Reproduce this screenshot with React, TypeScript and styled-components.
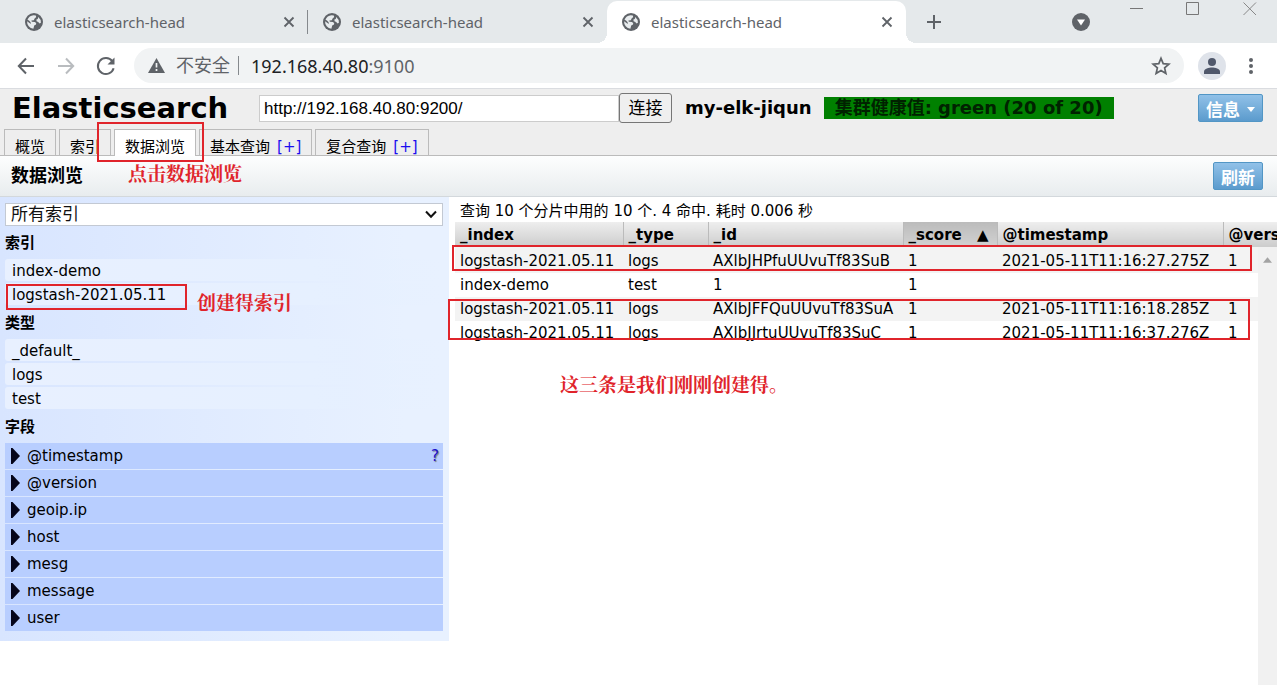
import React from "react";
import styled, { createGlobalStyle, css } from "styled-components";

const verdana = `Verdana, "DejaVu Sans", "Noto Sans CJK SC", sans-serif`;
const chromeFont = `"Noto Sans", "Open Sans", "Noto Sans CJK SC", sans-serif`;

const GlobalStyle = createGlobalStyle`
  *, *::before, *::after { box-sizing: border-box; }
  body { margin: 0; background: #fff; color: #000; font: 15px/24px ${verdana}; }
  button, input, select { margin: 0; font: inherit; color: inherit; }
  h1, h2, h3, ul { margin: 0; padding: 0; font-weight: bold; }
  ul { list-style: none; font-weight: normal; }
`;

const Page = styled.div`
  position: relative;
  display: flex;
  flex-direction: column;
  min-height: 100vh;
  overflow: hidden;
`;

/* browser frame */

const TabStrip = styled.div`
  display: flex;
  align-items: stretch;
  height: 43px;
  background: #e5e9eb;
  font: 15px/24px ${chromeFont};
  color: #5f6368;
`;

const BrowserTab = styled.div<{ $active?: boolean; $divider?: boolean }>`
  position: relative;
  display: flex;
  align-items: center;
  flex: 0 1 299px;
  min-width: 0;
  gap: 11px;
  padding: 1px 13px 0 15px;
  &:first-child { flex-basis: 308px; padding-left: 25px; }
  ${(p) => p.$active && css`
    background: #fff;
    border-radius: 10px 10px 0 0;
    margin-top: 1px;
    padding-top: 0;
    &::before, &::after {
      content: "";
      position: absolute;
      bottom: 0;
      width: 10px;
      height: 10px;
    }
    &::before { right: 100%; background: radial-gradient(circle at 0 0, #e5e9eb 10px, #fff 10px); }
    &::after { left: 100%; background: radial-gradient(circle at 100% 0, #e5e9eb 10px, #fff 10px); }
  `}
  ${(p) => p.$divider && css`
    &::after {
      content: "";
      position: absolute;
      right: 0;
      top: 10px;
      width: 1px;
      height: 24px;
      background: #85898d;
    }
  `}
`;

const TabTitle = styled.span`
  flex: 1;
  white-space: nowrap;
  overflow: hidden;
`;

const IconButton = styled.button`
  display: flex;
  align-items: center;
  justify-content: center;
  flex: none;
  padding: 0;
  border: 0;
  background: none;
  color: #5f6368;
`;

const NewTab = styled(IconButton)`
  width: 55px;
`;

const Spacer = styled.div`
  flex: 1;
`;

const TabSearch = styled(IconButton)`
  width: 18px;
  margin-right: 40px;
`;

const WindowControls = styled.div`
  display: flex;
  align-items: flex-start;
  gap: 43px;
  padding: 2px 20px 0 0;
`;

const Toolbar = styled.div`
  display: flex;
  align-items: center;
  gap: 18px;
  height: 46px;
  padding: 0 15px 0 16px;
  background: #fff;
  border-bottom: 1px solid #dadce0;
`;

const AddressBar = styled.div`
  display: flex;
  align-items: center;
  flex: 1;
  height: 35px;
  padding: 0 13px 0 14px;
  border-radius: 18px;
  background: #f1f3f4;
  font: 18px/24px ${chromeFont};
  color: #5f6368;
`;

const Insecure = styled.span`
  margin: 0 8px 0 11px;
  padding-right: 8px;
  line-height: 19px;
  border-right: 1px solid #85898d;
`;

const Url = styled.span`
  flex: 1;
  margin-left: 4px;
  b { font-weight: normal; color: #202124; }
`;

const Nav = styled.div`
  display: flex;
  gap: 20px;
`;

const Avatar = styled(IconButton)`
  width: 28px;
  height: 28px;
  margin: 0 -4px 0 -4px;
  border-radius: 50%;
  background: #dfe3ea;
`;

/* elasticsearch-head application */

const Header = styled.header`
  display: flex;
  flex-direction: column;
  justify-content: space-between;
  height: 67px;
  background: #eee;
  border-bottom: 1px solid #bbb;
`;

const HeaderTop = styled.div`
  display: flex;
  align-items: center;
  height: 38px;
  padding: 0 14px 0 12px;
`;

const AppTitle = styled.h1`
  width: 247px;
  font-size: 29px;
  line-height: 36px;
`;

const ConnectForm = styled.form`
  display: flex;
  align-items: center;
`;

const UriInput = styled.input`
  width: 360px;
  height: 27px;
  padding: 2px 4px 0;
  border: 1px solid #ccc;
  background: #fff;
  font: 17px/24px "Liberation Sans", Arial, sans-serif;
`;

const ConnectButton = styled.button`
  width: 53px;
  height: 30px;
  padding: 0;
  border: 1px solid #767676;
  border-radius: 3px;
  background: #efefef;
  font-size: 17px;
`;

const ClusterName = styled.strong`
  margin: 0 12px 0 13px;
  font-size: 18px;
  white-space: nowrap;
`;

const Health = styled.strong`
  padding: 0 11px;
  background: #008000;
  color: #020;
  font-size: 18px;
  line-height: 22px;
  white-space: nowrap;
`;

const BlueButton = styled.button`
  display: flex;
  align-items: center;
  gap: 7px;
  height: 28px;
  padding: 3px 7px 0;
  border: 1px solid #5296c5;
  border-radius: 2px;
  background: linear-gradient(#91c1e8, #5b9bcd);
  color: #fff;
  font-size: 17px;
  font-weight: bold;
  white-space: nowrap;
`;

const Menu = styled.nav`
  display: flex;
  align-items: flex-end;
  gap: 3px;
  padding-left: 4px;
`;

const MenuItem = styled.button<{ $active?: boolean }>`
  height: 26px;
  padding: 7px 10px 0;
  border: 1px solid #bbb;
  border-bottom: 0;
  background: ${(p) => (p.$active ? "#fff" : "#eee")};
  white-space: nowrap;
  line-height: 20px;
  ${(p) => p.$active && css`height: 27px; margin-bottom: -1px;`}
  span { margin-left: 7px; color: #1a0dee; }
`;

const SectionBar = styled.div`
  display: flex;
  align-items: center;
  justify-content: space-between;
  height: 41px;
  padding: 0 14px 0 11px;
  background: linear-gradient(#fdfefe, #e8ecee);
  border-bottom: 1px solid #d3d8dc;
  h2 { font-size: 18px; }
`;

const Body = styled.main`
  display: flex;
  flex: 1;
  align-items: flex-start;
`;

const Sidebar = styled.aside`
  flex: 0 0 449px;
  padding: 6px 6px 9px 5px;
  background: linear-gradient(90deg, #d8e5ff, #e8f1ff 90%);
`;

const IndexSelect = styled.div`
  position: relative;
  display: flex;
  margin-bottom: 1px;
  color: #111;
  select {
    width: 100%;
    height: 23px;
    padding: 0 5px;
    border: 1px solid #c3c9d3;
    background: #fff;
    appearance: none;
    font-size: 17px;
    line-height: 21px;
  }
  svg { position: absolute; right: 6px; top: 7px; pointer-events: none; }
`;

const FilterTitle = styled.h3`
  padding: 6px 0;
  font-size: 15px;
  line-height: 20px;
`;

const FilterItem = styled.li`
  height: 22px;
  margin: 0 0 2px;
  padding: 0 7px;
  border-radius: 3px;
  line-height: 24px;
  background: linear-gradient(90deg, #e8f0ff, #e6f0ff 70%, transparent);
`;

const Field = styled.li`
  display: flex;
  align-items: center;
  gap: 7px;
  height: 26px;
  margin-bottom: 1px;
  padding: 0 3px 0 6px;
  background: #b8ceff;
  span { flex: 1; }
  a { color: #1a0dcc; text-decoration: none; text-shadow: 1px 1px 1px #777; padding-right: 1px; }
`;

const Results = styled.section`
  flex: 1;
  align-self: stretch;
  display: flex;
  flex-direction: column;
  min-width: 0;
  padding: 3px 0 0 6px;
`;

const Summary = styled.p`
  margin: 0;
  padding-left: 5px;
  line-height: 22px;
`;

const TableArea = styled.div`
  position: relative;
  flex: 1;
  overflow: hidden;
`;

const DataTable = styled.table`
  width: 849px;
  table-layout: fixed;
  border-collapse: collapse;
  tbody tr:nth-child(odd) { background: #f3f3f3; }
  tbody tr:first-child td { padding-top: 2px; height: 26px; }
  td { height: 24px; padding: 0 5px; line-height: 24px; white-space: nowrap; }
`;

const HeadCell = styled.th<{ $w: number; $sorted?: boolean }>`
  width: ${(p) => p.$w}px;
  height: 25px;
  padding: 2px 5px 0;
  border-right: 1px solid #bbb;
  background: ${(p) => (p.$sorted ? "linear-gradient(#bbb, #d2d2d2)" : "linear-gradient(#eee, #ccc)")};
  text-align: left;
  white-space: nowrap;
  line-height: 23px;
  span { float: right; margin-right: 3px; }
`;

const ScrollTrack = styled.div`
  position: absolute;
  top: 25px;
  right: 0;
  bottom: 0;
  display: flex;
  align-items: flex-start;
  width: 19px;
  padding: 10px 5px;
  background: #f1f1f1;
`;

/* red review marks drawn over the page */

const Mark = styled.div<{ $x: number; $y: number; $w: number; $h: number }>`
  position: absolute;
  left: ${(p) => p.$x}px;
  top: ${(p) => p.$y}px;
  width: ${(p) => p.$w}px;
  height: ${(p) => p.$h}px;
  border: 2px solid #e0242b;
  pointer-events: none;
`;

const Note = styled.p<{ $x: number; $y: number }>`
  position: absolute;
  left: ${(p) => p.$x}px;
  top: ${(p) => p.$y}px;
  margin: 0;
  color: #e0242b;
  font: bold 19px/24px "Noto Serif CJK SC", SimSun, "Noto Sans CJK SC", serif;
  white-space: nowrap;
`;

const Globe = () => (
  <svg width="18" height="18" viewBox="0 0 18 18" aria-hidden="true">
    <circle cx="9" cy="9" r="9" fill="#5f6368" />
    <path d="M8.600 2.200 L10.800 2.400 L11.200 4 L9.600 5.600 L8.800 7.200 L6.400 7.400 L6.800 8.800 L9.800 8.900 L11.200 10 L11 11.500 L9.200 12.600 L8.400 15.800 A7 7 0 0 1 2.100 8.300 L5.800 11 L5.600 9.200 L4 7.600 L2.500 6.700 A7 7 0 0 1 8.600 2.200Z" fill="#e8ecee" />
    <path d="M13.200 4 A7 7 0 0 1 15.900 9.800 L14.600 10.400 L13.200 8.900 L11.600 8.300 L11.400 6.600 L12.800 6Z" fill="#e8ecee" />
  </svg>
);

const Cross = () => (
  <svg width="12" height="12" viewBox="0 0 12 12" aria-hidden="true">
    <path d="M1.500 1.500 L10.500 10.500 M10.500 1.500 L1.500 10.500" stroke="#5f6368" strokeWidth="1.800" />
  </svg>
);

const tabs = [{ divider: true }, {}, { active: true }];

const menu = [
  { label: "概览" },
  { label: "索引" },
  { label: "数据浏览", active: true },
  { label: "基本查询", add: true },
  { label: "复合查询", add: true },
];

const columns = [
  { name: "_index", width: 168 },
  { name: "_type", width: 85 },
  { name: "_id", width: 195 },
  { name: "_score", width: 94, sorted: true },
  { name: "@timestamp", width: 226 },
  { name: "@version", width: 81 },
];

const rows = [
  ["logstash-2021.05.11", "logs", "AXlbJHPfuUUvuTf83SuB", "1", "2021-05-11T11:16:27.275Z", "1"],
  ["index-demo", "test", "1", "1", "", ""],
  ["logstash-2021.05.11", "logs", "AXlbJFFQuUUvuTf83SuA", "1", "2021-05-11T11:16:18.285Z", "1"],
  ["logstash-2021.05.11", "logs", "AXlbJJrtuUUvuTf83SuC", "1", "2021-05-11T11:16:37.276Z", "1"],
];

const fields = ["@timestamp", "@version", "geoip.ip", "host", "mesg", "message", "user"];

export default function App() {
  return (
    <Page>
      <GlobalStyle />
      <TabStrip>
        {tabs.map((tab, i) => (
          <BrowserTab key={i} $active={tab.active} $divider={tab.divider}>
            <Globe />
            <TabTitle>elasticsearch-head</TabTitle>
            <IconButton aria-label="Close tab"><Cross /></IconButton>
          </BrowserTab>
        ))}
        <NewTab aria-label="New tab">
          <svg width="16" height="16" viewBox="0 0 16 16">
            <path d="M8 1V15M1 8H15" stroke="#5f6368" strokeWidth="2" />
          </svg>
        </NewTab>
        <Spacer />
        <TabSearch aria-label="Search tabs">
          <svg width="18" height="18" viewBox="0 0 18 18">
            <circle cx="9" cy="9" r="9" fill="#5f6368" />
            <path d="M5 6.500H13L9 12.500Z" fill="#fff" />
          </svg>
        </TabSearch>
        <WindowControls>
          <IconButton aria-label="Minimize">
            <svg width="13" height="14" viewBox="0 0 13 14"><path d="M0 6.500H13" stroke="#777" /></svg>
          </IconButton>
          <IconButton aria-label="Maximize">
            <svg width="14" height="14" viewBox="0 0 14 14"><path d="M.5 .5H12.500V12.500H.5Z" fill="none" stroke="#777" /></svg>
          </IconButton>
          <IconButton aria-label="Close window">
            <svg width="14" height="14" viewBox="0 0 14 14"><path d="M.5 .5L13 13M13 .5L.5 13" stroke="#888" /></svg>
          </IconButton>
        </WindowControls>
      </TabStrip>

      <Toolbar>
        <Nav>
          <IconButton aria-label="Back">
            <svg width="20" height="20" viewBox="0 0 20 20" fill="none" stroke="#5f6368" strokeWidth="2"><path d="M18 10H3M10 2.500L2.800 10L10 17.500" /></svg>
          </IconButton>
          <IconButton aria-label="Forward">
            <svg width="20" height="20" viewBox="0 0 20 20" fill="none" stroke="#b9bcbf" strokeWidth="2"><path d="M2 10H17M10 2.500L17.200 10L10 17.500" /></svg>
          </IconButton>
          <IconButton aria-label="Reload">
            <svg width="20" height="20" viewBox="0 0 20 20"><path d="M16.300 5.200A8 8 0 1 0 17.600 12.200" fill="none" stroke="#5f6368" strokeWidth="2" /><path d="M18.500 1.500V8.500H11.500Z" fill="#5f6368" /></svg>
          </IconButton>
        </Nav>
        <AddressBar>
          <svg width="17" height="15" viewBox="0 0 17 15"><path d="M8.500 0L17 15H0Z" fill="#5f6368" /><path d="M8.500 5V9.500M8.500 11V13" stroke="#f1f3f4" strokeWidth="1.700" /></svg>
          <Insecure>不安全</Insecure>
          <Url><b>192.168.40.80</b>:9100</Url>
          <IconButton aria-label="Bookmark">
            <svg width="20" height="20" viewBox="0 0 20 20"><path d="M10 2.300L12.200 7.600L17.900 8.100L13.600 11.900L14.900 17.500L10 14.500L5.100 17.500L6.400 11.900L2.100 8.100L7.800 7.600Z" fill="none" stroke="#5f6368" strokeWidth="1.700" /></svg>
          </IconButton>
        </AddressBar>
        <Avatar aria-label="Profile">
          <svg width="16" height="16" viewBox="0 0 16 16" fill="#50586b"><circle cx="8" cy="4" r="4" /><path d="M0 16V13.500C0 10.700 5 9.500 8 9.500S16 10.700 16 13.500V16Z" /></svg>
        </Avatar>
        <IconButton aria-label="Menu">
          <svg width="22" height="18" viewBox="0 0 22 18" fill="#5f6368"><circle cx="11" cy="3" r="2" /><circle cx="11" cy="9" r="2" /><circle cx="11" cy="15" r="2" /></svg>
        </IconButton>
      </Toolbar>

      <Header>
        <HeaderTop>
          <AppTitle>Elasticsearch</AppTitle>
          <ConnectForm onSubmit={(e) => e.preventDefault()}>
            <UriInput aria-label="URI" defaultValue="http://192.168.40.80:9200/" />
            <ConnectButton>连接</ConnectButton>
          </ConnectForm>
          <ClusterName>my-elk-jiqun</ClusterName>
          <Health>集群健康值: green (20 of 20)</Health>
          <Spacer />
          <BlueButton>
            信息
            <svg width="8" height="5" viewBox="0 0 8 5"><path d="M0 0H8L4 5Z" fill="#fff" /></svg>
          </BlueButton>
        </HeaderTop>
        <Menu>
          {menu.map((item) => (
            <MenuItem key={item.label} $active={item.active}>
              {item.label}
              {item.add && <span>[+]</span>}
            </MenuItem>
          ))}
        </Menu>
      </Header>

      <SectionBar>
        <h2>数据浏览</h2>
        <BlueButton>刷新</BlueButton>
      </SectionBar>

      <Body>
        <Sidebar>
          <IndexSelect>
            <select aria-label="索引">
              <option>所有索引</option>
            </select>
            <svg width="12" height="9" viewBox="0 0 12 9"><path d="M1 1.500L6 6.700L11 1.500" fill="none" stroke="#111" strokeWidth="2" /></svg>
          </IndexSelect>
          <FilterTitle>索引</FilterTitle>
          <ul>
            <FilterItem>index-demo</FilterItem>
            <FilterItem>logstash-2021.05.11</FilterItem>
          </ul>
          <FilterTitle>类型</FilterTitle>
          <ul>
            <FilterItem>_default_</FilterItem>
            <FilterItem>logs</FilterItem>
            <FilterItem>test</FilterItem>
          </ul>
          <FilterTitle>字段</FilterTitle>
          <ul>
            {fields.map((field, i) => (
              <Field key={field}>
                <svg width="9" height="16" viewBox="0 0 9 16"><path d="M0 0H1.500L9 8L1.500 16H0Z" fill="#05051a" /></svg>
                <span>{field}</span>
                {i === 0 && <a href="#help">?</a>}
              </Field>
            ))}
          </ul>
        </Sidebar>

        <Results>
          <Summary>查询 10 个分片中用的 10 个. 4 命中. 耗时 0.006 秒</Summary>
          <TableArea>
            <DataTable>
              <thead>
                <tr>
                  {columns.map((c) => (
                    <HeadCell key={c.name} $w={c.width} $sorted={c.sorted}>
                      {c.name}
                      {c.sorted && <span>▲</span>}
                    </HeadCell>
                  ))}
                </tr>
              </thead>
              <tbody>
                {rows.map((row, r) => (
                  <tr key={r}>
                    {row.map((cell, c) => <td key={c}>{cell}</td>)}
                  </tr>
                ))}
              </tbody>
            </DataTable>
            <ScrollTrack>
              <svg width="10" height="6" viewBox="0 0 10 6"><path d="M0 6L5 0L10 6Z" fill="#a3a3a3" /></svg>
            </ScrollTrack>
          </TableArea>
        </Results>
      </Body>

      <Mark $x={97} $y={122} $w={107} $h={40} />
      <Mark $x={6} $y={284} $w={181} $h={26} />
      <Mark $x={452} $y={245} $w={800} $h={26} />
      <Mark $x={448} $y={299} $w={802} $h={41} />
      <Note $x={128} $y={161}>点击数据浏览</Note>
      <Note $x={197} $y={290}>创建得索引</Note>
      <Note $x={560} $y={372}>这三条是我们刚刚创建得。</Note>
    </Page>
  );
}
